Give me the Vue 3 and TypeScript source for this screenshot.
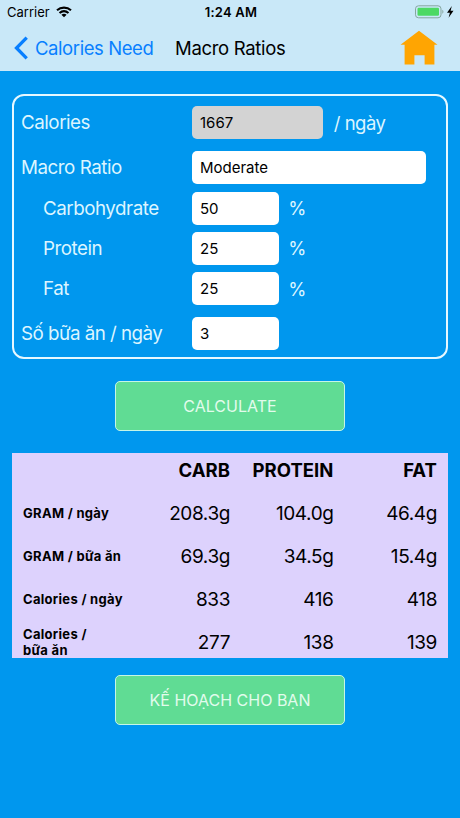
<script setup lang="ts">
interface Field {
  label: string
  value: string
  unit: string
  kind: string
}

interface Row {
  label: string
  values: string[]
}

const fields: Field[] = [
  { label: 'Calories', value: '1667', unit: '/ ngày', kind: 'calories' },
  { label: 'Macro Ratio', value: 'Moderate', unit: '', kind: 'ratio' },
  { label: 'Carbohydrate', value: '50', unit: '%', kind: 'macro carb' },
  { label: 'Protein', value: '25', unit: '%', kind: 'macro protein' },
  { label: 'Fat', value: '25', unit: '%', kind: 'macro fat' },
  { label: 'Số bữa ăn / ngày', value: '3', unit: '', kind: 'meals' },
]

const columns: string[] = ['CARB', 'PROTEIN', 'FAT']

const rows: Row[] = [
  { label: 'GRAM / ngày', values: ['208.3g', '104.0g', '46.4g'] },
  { label: 'GRAM / bữa ăn', values: ['69.3g', '34.5g', '15.4g'] },
  { label: 'Calories / ngày', values: ['833', '416', '418'] },
  { label: 'Calories /\nbữa ăn', values: ['277', '138', '139'] },
]
</script>

<template>
  <div class="screen">
    <header class="top">
      <div class="status">
        <div class="carrier">
          <span>Carrier</span>
          <svg class="wifi" width="16" height="12" viewBox="0 0 16 12">
            <path d="M1 4.3C5 .7 11 .7 15 4.3M3.5 7C6.2 4.7 9.800 4.700 12.500 7" fill="none" stroke="#000" stroke-width="2.1" />
            <path d="M5.400 8.700C7 7.500 9 7.500 10.600 8.700L8 11.300Z" fill="#000" />
          </svg>
        </div>
        <span class="clock">1:24 AM</span>
        <div class="power">
          <svg width="41" height="14" viewBox="0 0 41 14">
            <rect x="1.500" y=".8" width="25.500" height="12" rx="3" fill="none" stroke="#86a69f" />
            <rect x="3.500" y="2.800" width="21.500" height="8" rx="1.200" fill="#4cd964" />
            <path d="M28.300 4.800c1.500.5 1.500 3.500 0 4Z" fill="#86a69f" />
            <path d="M37.800 1 33 7.700h2.900l-1.300 5 4.900-7h-2.900Z" fill="#000" />
          </svg>
        </div>
      </div>
      <nav class="nav">
        <div class="back">
          <svg width="15" height="24" viewBox="0 0 15 24">
            <path d="M12.700 1.700 2.500 12l10.200 10.300" fill="none" stroke="#087fff" stroke-width="3.300" />
          </svg>
          <span>Calories Need</span>
        </div>
        <h1 class="title">Macro Ratios</h1>
        <svg class="home" width="38" height="36" viewBox="0 0 38 36">
          <path d="M19 .8 37.500 14.800h-3.100v19.700h-9.800v-9.300h-10.200v9.300H4.600V14.800H.5Z" fill="#ffa502" />
        </svg>
      </nav>
    </header>

    <main class="content">
      <section class="panel">
        <div v-for="f in fields" :key="f.label" class="field" :class="f.kind">
          <label class="label"><span>{{ f.label }}</span></label>
          <div class="box">{{ f.value }}</div>
          <span v-if="f.unit" class="unit">{{ f.unit }}</span>
        </div>
      </section>

      <button class="btn calculate"><span>CALCULATE</span></button>

      <section class="table">
        <div class="row head">
          <span></span>
          <span v-for="c in columns" :key="c" class="cell">{{ c }}</span>
        </div>
        <div v-for="r in rows" :key="r.label" class="row">
          <span class="name">{{ r.label }}</span>
          <span v-for="v in r.values" :key="v" class="cell">{{ v }}</span>
        </div>
      </section>

      <button class="btn plan"><span>KẾ HOẠCH CHO BẠN</span></button>
    </main>
  </div>
</template>

<style>
body {
  background: #0097ee;
}
</style>

<style scoped>
.screen {
  box-sizing: border-box;
  width: 460px;
  height: 818px;
  overflow: hidden;
  background: #0097ee;
  color: #000;
  font-family: Inter, "Liberation Sans", sans-serif;
}
.top {
  height: 71px;
  background: #c9e8f8;
}
.status {
  display: grid;
  grid-template-columns: 1fr auto 1fr;
  align-items: center;
  height: 24px;
  padding: 0 5px 0 7px;
}
.carrier {
  display: flex;
  align-items: center;
  gap: 6px;
  font-size: 13px;
  letter-spacing: 0;
}
.clock {
  font-size: 13px;
  font-weight: 600;
  letter-spacing: 0.2px;
}
.power {
  display: flex;
  justify-content: flex-end;
}
.nav {
  display: flex;
  align-items: center;
  height: 47px;
  padding: 0 22px 0 14px;
}
.back {
  display: flex;
  align-items: center;
  gap: 6px;
  width: 161px;
  color: #087fff;
  font-size: 18.500px;
  letter-spacing: -0.420px;
  white-space: nowrap;
}
.title {
  flex: 1;
  margin: 0;
  font-size: 18.500px;
  font-weight: 400;
  letter-spacing: -0.320px;
  white-space: nowrap;
}
.content {
  display: flex;
  flex-direction: column;
  align-items: center;
  padding: 23px 12px 0;
}
.panel {
  box-sizing: border-box;
  width: 436px;
  height: 265px;
  padding: 10.300px 0 0 7px;
  border: 2px solid #e6f8ff;
  border-radius: 12px;
}
.field {
  display: flex;
  align-items: center;
  height: 33px;
  margin-bottom: 7.300px;
}
.field.calories {
  margin-bottom: 12px;
}
.field.fat {
  margin-bottom: 12px;
}
.label {
  width: 171.300px;
  color: #dcf5ff;
  font-size: 18.800px;
  letter-spacing: -0.480px;
  white-space: nowrap;
}
.macro .label {
  box-sizing: border-box;
  padding-left: 22px;
}
.meals .label {
  letter-spacing: -0.550px;
}
.box {
  box-sizing: border-box;
  width: 87px;
  height: 33px;
  padding-left: 7.700px;
  border-radius: 5px;
  background: #fff;
  font-size: 15px;
  line-height: 33px;
}
.calories .box {
  width: 130.500px;
  background: #d3d3d3;
}
.ratio .box {
  width: 233.500px;
}
.unit {
  margin-left: 9px;
  color: #dcf5ff;
  font-size: 18.500px;
  letter-spacing: -0.500px;
}
.calories .unit {
  margin-left: 11px;
}
.btn {
  box-sizing: border-box;
  width: 230px;
  height: 50px;
  padding: 0;
  border: 1.500px solid #c6f5e6;
  border-radius: 5px;
  background: #60dc94;
  color: #e2fbec;
  font-family: inherit;
  font-size: 16px;
  font-weight: 400;
}
.calculate {
  margin-top: 22px;
}
.table {
  width: 436px;
  height: 204.500px;
  margin-top: 22.300px;
  overflow: hidden;
  background: #ddd2fd;
}
.row {
  display: grid;
  grid-template-columns: 104px 103px 103.500px 103.500px;
  align-items: center;
  height: 43px;
  padding: 0 11px;
}
.row.head {
  height: 39px;
  box-sizing: border-box;
  padding-bottom: 6px;
}
.cell {
  text-align: right;
  font-size: 19px;
  letter-spacing: -0.400px;
}
.head .cell {
  font-size: 18.500px;
  font-weight: 700;
  letter-spacing: 0.050px;
}
.name {
  font-size: 13px;
  font-weight: 700;
  line-height: 15.500px;
  letter-spacing: 0.300px;
  white-space: pre-line;
}
.plan {
  margin-top: 17.500px;
}
</style>
